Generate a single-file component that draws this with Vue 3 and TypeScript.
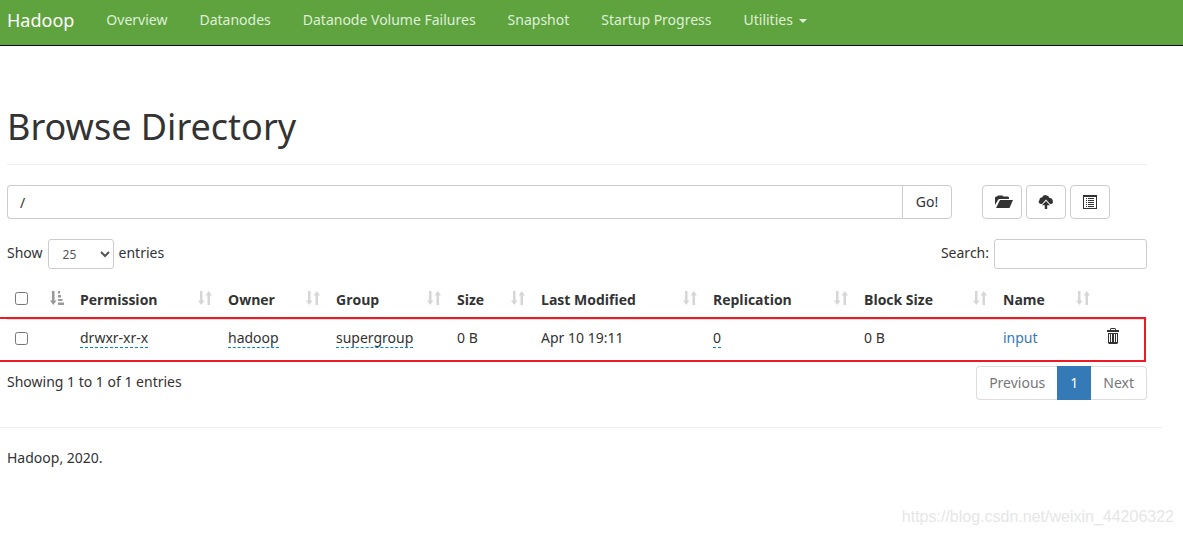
<script setup lang="ts">
import { ref } from 'vue'

interface Column {
  key: string
  label: string
}

interface FileEntry {
  permission: string
  owner: string
  group: string
  size: string
  modified: string
  replication: number
  blockSize: string
  name: string
}

const navLinks: string[] = ['Overview', 'Datanodes', 'Datanode Volume Failures', 'Snapshot', 'Startup Progress']

const columns: Column[] = [
  { key: 'permission', label: 'Permission' },
  { key: 'owner', label: 'Owner' },
  { key: 'group', label: 'Group' },
  { key: 'size', label: 'Size' },
  { key: 'modified', label: 'Last Modified' },
  { key: 'replication', label: 'Replication' },
  { key: 'block', label: 'Block Size' },
  { key: 'name', label: 'Name' },
]

const files: FileEntry[] = [
  {
    permission: 'drwxr-xr-x',
    owner: 'hadoop',
    group: 'supergroup',
    size: '0 B',
    modified: 'Apr 10 19:11',
    replication: 0,
    blockSize: '0 B',
    name: 'input',
  },
]

const path = ref('/')
const pageSize = ref('25')
const search = ref('')
</script>

<template>
  <div class="page">
    <header class="navbar">
      <a class="brand" href="#">Hadoop</a>
      <nav class="nav">
        <a v-for="link in navLinks" :key="link" href="#">{{ link }}</a>
        <a href="#">Utilities<span class="caret"></span></a>
      </nav>
    </header>

    <main class="content">
      <h1>Browse Directory</h1>

      <div class="toolbar">
        <form class="path" @submit.prevent>
          <input v-model="path" type="text" aria-label="Directory path" />
          <button type="submit">Go!</button>
        </form>
        <div class="actions">
          <button type="button" aria-label="Create directory">
            <svg width="14" height="14" viewBox="0 0 14 14">
              <path d="M0 10V2.500L1 1.500h1L3 .500h4.500l1 1H13l1 1V4H4L3 5z" />
              <path d="M5 5h13l-3.500 8H1z" />
            </svg>
          </button>
          <button type="button" aria-label="Upload files">
            <svg width="16" height="14" viewBox="0 0 16 14">
              <path d="M3 9A2.200 2.200 0 0 1 1.600 5 2 2 0 0 1 4 2.500a4 4 0 0 1 7.500.5A3 3 0 0 1 14.800 6.500 2 2 0 0 1 13 9h-1L8 4.500 4 9z" />
              <path d="M8 6l4 4.200H9.200V14H6.800v-3.800H4z" />
            </svg>
          </button>
          <button type="button" aria-label="Cut and paste">
            <svg width="14" height="14" viewBox="0 0 14 14">
              <path fill-rule="evenodd" d="M0 0h14v14H0zM1 2v11h12V2z" />
              <path d="M3 3h1v1H3zM5 3h6v1H5zM3 5h1v1H3zM5 5h6v1H5zM3 7h1v1H3zM5 7h6v1H5zM3 9h1v1H3zM5 9h6v1H5zM3 11h1v1H3zM5 11h6v1H5z" />
            </svg>
          </button>
        </div>
      </div>

      <div class="controls">
        <label>
          Show
          <select v-model="pageSize">
            <option>25</option>
            <option>50</option>
            <option>100</option>
          </select>
          entries
        </label>
        <label>Search:<input v-model="search" type="search" /></label>
      </div>

      <div class="listing">
        <table>
          <colgroup>
            <col class="c-check" />
            <col v-for="c in columns" :key="c.key" :class="'c-' + c.key" />
            <col class="c-trash" />
          </colgroup>
          <thead>
            <tr>
              <th>
                <div class="head">
                  <input type="checkbox" aria-label="Select all" />
                  <svg class="sorted" width="14" height="14" viewBox="0 0 14 14">
                    <path d="M2 0h2.500v9.500H6.500L3.250 14 0 9.500h2zM8 0h2v2.500H8zM8 4h3v2.500H8zM8 8h4.500v2H8zM8 11.500h6V14H8z" />
                  </svg>
                </div>
              </th>
              <th v-for="c in columns" :key="c.key">
                <div class="head">
                  <span>{{ c.label }}</span>
                  <svg class="sort" width="14" height="14" viewBox="0 0 14 14">
                    <path d="M2 0h2.500v9.500H6.500L3.250 14 0 9.500h2zM9.500 14V4.500h-2L10.750 0 14 4.500h-2V14z" />
                  </svg>
                </div>
              </th>
              <th></th>
            </tr>
          </thead>
          <tbody>
            <tr v-for="f in files" :key="f.name">
              <td><div class="head"><input type="checkbox" :aria-label="'Select ' + f.name" /></div></td>
              <td><span class="editable">{{ f.permission }}</span></td>
              <td><span class="editable">{{ f.owner }}</span></td>
              <td><span class="editable">{{ f.group }}</span></td>
              <td>{{ f.size }}</td>
              <td>{{ f.modified }}</td>
              <td><span class="editable">{{ f.replication }}</span></td>
              <td>{{ f.blockSize }}</td>
              <td><a href="#">{{ f.name }}</a></td>
              <td>
                <button class="trash" type="button" :aria-label="'Delete ' + f.name">
                  <svg width="14" height="16" viewBox="0 0 14 16">
                    <path fill-rule="evenodd" d="M4 2V1l1-1h4l1 1v1h3v2H1V2zM5 2h4V1H5z" />
                    <path fill-rule="evenodd" d="M2 5h10v10l-1 1H3l-1-1zM3 6v8h1V6zM5 6v8h1V6zM8 6v8h1V6zM10 6v8h1V6z" />
                  </svg>
                </button>
              </td>
            </tr>
          </tbody>
        </table>
        <div class="highlight"></div>
      </div>

      <div class="summary">
        <span>Showing 1 to 1 of 1 entries</span>
        <nav class="pager" aria-label="Pages">
          <a href="#">Previous</a>
          <a class="active" href="#">1</a>
          <a href="#">Next</a>
        </nav>
      </div>
    </main>

    <footer>
      <p>Hadoop, 2020.</p>
      <div class="watermark">https://blog.csdn.net/weixin_44206322</div>
    </footer>
  </div>
</template>

<style>
body {
  margin: 0;
  background: #fff;
}
</style>

<style scoped>
.page,
.page * {
  box-sizing: border-box;
}
.page {
  color: #333;
  font: 14px/20px "Noto Sans", "Open Sans", sans-serif;
}
input,
select,
button {
  font: inherit;
  color: inherit;
}
a {
  color: #337ab7;
  text-decoration: none;
}
svg {
  display: block;
  overflow: visible;
  fill: currentColor;
}
.navbar {
  display: flex;
  height: 46px;
  padding: 10px 7px 0;
  background: #5fa33e;
  border-bottom: 1px solid #080808;
}
.brand {
  margin-right: 16px;
  color: #fff;
  font-size: 18px;
}
.nav {
  display: flex;
}
.nav a {
  padding: 0 16px;
  color: #dff0d8;
}
.caret {
  display: inline-block;
  margin-left: 6px;
  vertical-align: middle;
  border-top: 4px solid;
  border-left: 4px solid transparent;
  border-right: 4px solid transparent;
}
.content {
  padding: 0 36px 0 7px;
}
h1 {
  margin: 0 0 20px;
  padding: 60px 0 16px;
  border-bottom: 1px solid #eee;
  font-size: 36px;
  line-height: 42px;
  font-weight: 400;
}
.toolbar {
  display: grid;
  grid-template-columns: 63fr 11fr;
  gap: 30px;
}
.path {
  display: flex;
}
.path input {
  flex: 1;
  min-width: 0;
  height: 34px;
  padding: 6px 12px;
  border: 1px solid #ccc;
  border-right: 0;
  border-radius: 4px 0 0 4px;
}
.path button,
.actions button {
  height: 34px;
  padding: 0;
  border: 1px solid #ccc;
  border-radius: 4px;
  background: #fff;
}
.path button {
  width: 50px;
  border-radius: 0 4px 4px 0;
}
.actions {
  display: flex;
  gap: 4px;
}
.actions button {
  display: flex;
  align-items: center;
  justify-content: center;
  width: 40px;
}
.controls {
  display: flex;
  justify-content: space-between;
  margin-top: 20px;
}
.controls label {
  display: flex;
  gap: 5px;
  line-height: 28px;
}
.controls select {
  width: 66px;
  height: 30px;
  padding: 0 10px;
  border: 1px solid #ccc;
  border-radius: 3px;
  background: #fff;
  color: #555;
  font-size: 12px;
}
.controls input {
  width: 153px;
  height: 30px;
  padding: 0 10px;
  border: 1px solid #ccc;
  border-radius: 3px;
}
.listing {
  position: relative;
  margin-top: 13px;
}
table {
  width: 100%;
  table-layout: fixed;
  border-collapse: collapse;
}
.c-check { width: 65px; }
.c-permission { width: 148px; }
.c-owner { width: 108px; }
.c-group { width: 121px; }
.c-size { width: 84px; }
.c-modified { width: 172px; }
.c-replication { width: 151px; }
.c-block { width: 139px; }
.c-name { width: 103px; }
.c-trash { width: 49px; }
th,
td {
  padding: 8px;
  text-align: left;
  white-space: nowrap;
}
th {
  border-bottom: 2px solid #ddd;
  font-family: "Open Sans", "Noto Sans", sans-serif;
  font-weight: 700;
}
.head {
  display: flex;
  align-items: center;
  justify-content: space-between;
  height: 20px;
}
.head input {
  width: 13px;
  height: 13px;
  margin: 0;
}
.head svg,
th .head input {
  margin-bottom: 4px;
}
.sorted {
  color: #999;
}
.sort {
  color: #d6d6d6;
}
.editable {
  display: inline-block;
  border-bottom: 1px dashed #08c;
  line-height: 18px;
}
td {
  height: 40px;
  vertical-align: top;
}
.trash {
  display: block;
  padding: 0;
  border: 0;
  background: none;
}
.highlight {
  position: absolute;
  inset: 35px 1px -3px -9px;
  border: 2px solid #ed1c24;
  pointer-events: none;
}
.summary {
  display: flex;
  justify-content: space-between;
  margin-top: 7px;
  line-height: 32px;
}
.pager {
  display: flex;
  line-height: 20px;
}
.pager a {
  height: 34px;
  padding: 6px 12px;
  border: 1px solid #ddd;
  color: #777;
}
.pager a:first-child {
  border-right: 0;
  border-radius: 4px 0 0 4px;
}
.pager a:last-child {
  border-left: 0;
  border-radius: 0 4px 4px 0;
}
.pager .active {
  border-color: #337ab7;
  background: #337ab7;
  color: #fff;
}
footer {
  margin: 27px 21px 0 0;
  border-top: 1px solid #eee;
}
footer p {
  margin: 20px 7px 0;
}
.watermark {
  margin: 39px -12px 0 0;
  color: #e6e6e6;
  font: 16px/20px "Liberation Sans", sans-serif;
  text-align: right;
}
</style>
